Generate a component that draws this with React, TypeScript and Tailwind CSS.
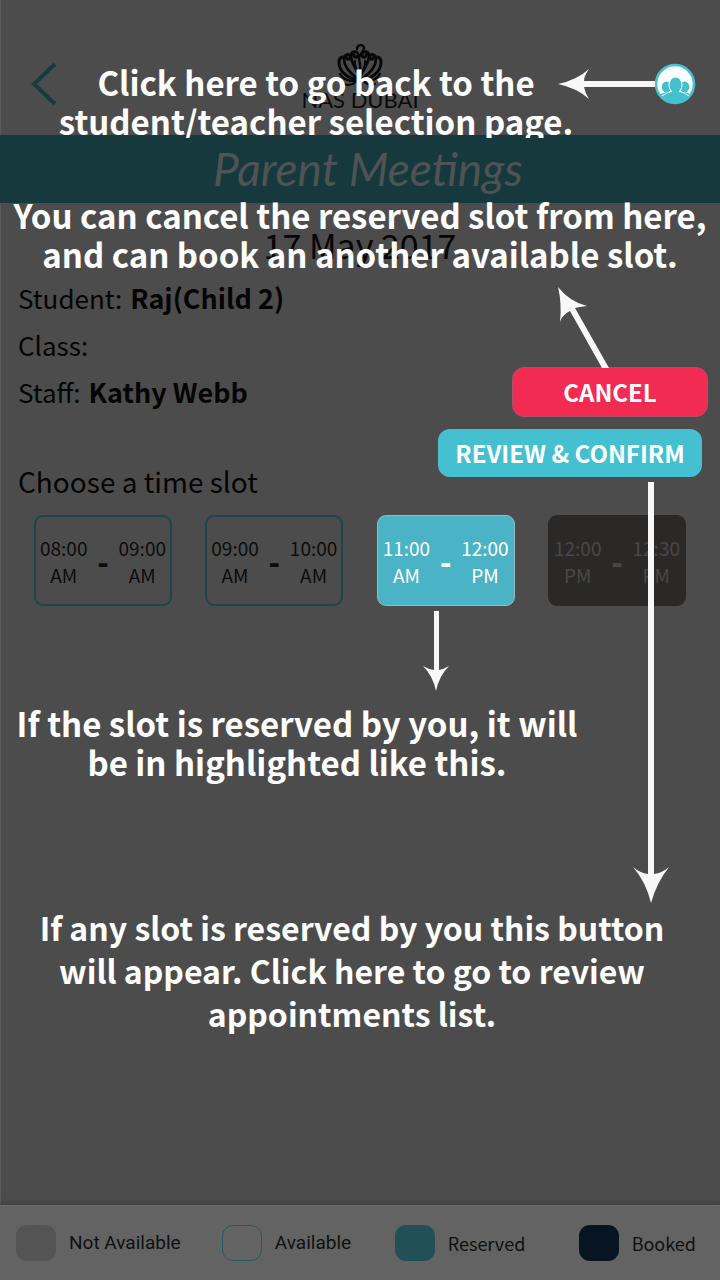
import type { ReactNode } from "react";

type SlotKind = "available" | "reserved" | "booked";

interface Slot {
  from: [string, string];
  to: [string, string];
  kind: SlotKind;
}

const slots: Slot[] = [
  { from: ["08:00", "AM"], to: ["09:00", "AM"], kind: "available" },
  { from: ["09:00", "AM"], to: ["10:00", "AM"], kind: "available" },
  { from: ["11:00", "AM"], to: ["12:00", "PM"], kind: "reserved" },
  { from: ["12:00", "PM"], to: ["12:30", "PM"], kind: "booked" },
];

const slotStyles: Record<SlotKind, string> = {
  available: "border-2 border-[#1d464b] px-1 text-[#0c0c0c]",
  reserved: "border border-[#93bcc4] bg-[#4ab3c5] px-[5px] text-white",
  booked: "border-2 border-[#2b2927] bg-[#2b2927] px-1 text-[#484746]",
};

function Note({ className, children }: { className: string; children: ReactNode }) {
  return (
    <p className={"text-center font-bold whitespace-nowrap text-white " + className}>{children}</p>
  );
}

function LotusHalf() {
  return (
    <>
      <path d="M24 34C21 27 15 20 15 13c0-5 7-6 7-1 0 3-4 3-4 0" strokeWidth="2.8" />
      <path d="M22 36C15 31 8 25 8 16c0-5 6-6 6-2 0 3-3 3-3 1" strokeWidth="2.8" />
      <path d="M20 37C11 34 3 28 3 19c0-4 3-6 5-4" strokeWidth="3" />
      <path d="M19 38C14 38 7 37 4 31" strokeWidth="2.4" />
      <path d="M20 39C16 42 12 43 9 41" strokeWidth="2" />
      <path d="M23 32C20 26 18 21 19 18" strokeWidth="2" />
    </>
  );
}

function Logo() {
  return (
    <div className="flex flex-col items-center">
      <svg width="48" height="44" viewBox="0 0 48 44" fill="none" stroke="#080808" strokeLinecap="round" aria-hidden="true">
        <LotusHalf />
        <g transform="matrix(-1 0 0 1 48 0)">
          <LotusHalf />
        </g>
        <path d="M21 6c0-5 7-5 7-1 0 4-5 6-5 10 0 3 2 4 1 19" strokeWidth="2.4" />
      </svg>
      <span className="font-['Lato','Noto_Sans',sans-serif] text-[22px] leading-[26px] text-[#0a0a0a]">NAS DUBAI</span>
    </div>
  );
}

function TimePart({ value }: { value: [string, string] }) {
  return (
    <span className="flex flex-col items-center text-[19px] leading-[27px]">
      <span>{value[0]}</span>
      <span>{value[1]}</span>
    </span>
  );
}

function LegendItem({ swatch, label, font }: { swatch: string; label: string; font: string }) {
  return (
    <li className="flex items-center gap-[13px]">
      <span className={"h-9 w-10 shrink-0 rounded-[11px] " + swatch} />
      <span className={"whitespace-nowrap text-[#101010] " + font}>{label}</span>
    </li>
  );
}

export default function App() {
  return (
    <main className="relative flex min-h-screen flex-col overflow-hidden bg-[#4c4c4c] font-['Noto_Sans_CJK_SC','Noto_Sans',sans-serif] text-[#050505] shadow-[inset_1px_0_0_#5a5a5a]">
      <header className="relative grid h-[135px] grid-cols-3 items-start px-6 pt-[43px]">
        <button aria-label="Back" className="mt-5 w-9 justify-self-start">
          <svg width="36" height="42" viewBox="0 0 36 42" fill="none" stroke="#173c40" strokeWidth="4" aria-hidden="true">
            <path d="M31 1L10 21l21 20" />
          </svg>
        </button>
        <Logo />
        <div className="relative mt-5 justify-self-end">
          <button aria-label="Student and teacher selection" className="block">
            <svg width="42" height="42" viewBox="0 0 42 42" aria-hidden="true">
              <circle cx="21" cy="21" r="19" fill="#fff" stroke="#45c0d1" strokeWidth="2.6" />
              <g fill="#45c0d1">
                <ellipse cx="12.500" cy="24" rx="4.800" ry="5.600" />
                <ellipse cx="30.500" cy="24" rx="4.800" ry="5.600" />
                <path d="M5 32q3-2 8-3h17q5 1 7 3z" />
                <path d="M7 34q5-4 11-5h7q6 1 11 5A19 19 0 0 1 7 34z" />
                <path d="M8 33q5-4 10-4.500M35 33q-5-4-10-4.500" fill="none" stroke="#fff" strokeWidth=".8" />
                <ellipse cx="21.500" cy="22" rx="6.500" ry="8" stroke="#fff" />
                <path d="M18 27h7v5h-7z" />
              </g>
            </svg>
          </button>
          <svg className="absolute top-[5px] right-[41px]" width="98" height="32" viewBox="0 0 98 32" fill="#f8f8f8" aria-hidden="true">
            <path d="M1 16Q20 12 32 1q-5 7-5 12h71v6H27q1 6 5 12Q20 20 1 16z" />
          </svg>
        </div>
      </header>

      <h1 className="flex h-[68px] items-center justify-center bg-[#16393d] pl-4 font-['Lato','Noto_Sans',sans-serif] text-[46px] leading-[68px] font-normal text-[#505353] italic">
        Parent Meetings
      </h1>

      <time dateTime="2017-05-17" className="mt-[22px] block text-center text-[34px] leading-10">17 May 2017</time>

      <section className="relative flex items-start pt-[9px]">
        <div className="flex-1 pl-[18px]">
          <dl className="flex flex-col text-[26px] leading-[47px]">
            <div className="flex gap-2"><dt>Student:</dt><dd className="text-[27px] font-bold">Raj(Child 2)</dd></div>
            <div className="flex gap-2"><dt>Class:</dt><dd /></div>
            <div className="flex gap-2"><dt>Staff:</dt><dd className="text-[27px] font-bold">Kathy Webb</dd></div>
          </dl>
          <h2 className="mt-12 text-[28px] leading-9">Choose a time slot</h2>
        </div>
        <div className="flex flex-col items-end gap-3 pt-[93px] pr-3">
          <div className="relative">
            <button className="h-[50px] w-[196px] rounded-xl border border-[#b05068] bg-[#f12b52] text-2xl leading-6 font-bold text-white">CANCEL</button>
            <svg className="absolute bottom-[49px] left-[44px]" width="54" height="84" viewBox="0 0 54 84" fill="#f8f8f8" aria-hidden="true">
              <path d="M2 3Q14 18 31 22q-8 1-12 2L53 84h-7L14 27Q6 31 4 38 6 20 2 3z" />
            </svg>
          </div>
          <div className="relative mr-[6px]">
            <button className="h-[48px] w-[264px] rounded-xl bg-[#45c0d1] text-2xl leading-6 font-bold whitespace-nowrap text-white">REVIEW &amp; CONFIRM</button>
            <svg className="absolute top-[53px] right-[33px] z-10" width="36" height="422" viewBox="0 0 36 422" fill="#f8f8f8" aria-hidden="true">
              <path d="M15 0h6v392q8-1 15-7Q24 400 18 421 13 400 0 385q7 6 15 7z" />
            </svg>
          </div>
        </div>
      </section>

      <ul className="mt-4 flex justify-between px-[34px]">
        {slots.map((slot) => (
          <li key={slot.from[0]} className="relative">
            <button className={"flex h-[91px] w-[138px] items-center justify-between rounded-[9px] " + slotStyles[slot.kind]}>
              <TimePart value={slot.from} />
              <span className="text-3xl font-black">-</span>
              <TimePart value={slot.to} />
            </button>
            {slot.kind === "reserved" && (
              <svg className="absolute top-[96px] left-[45px]" width="28" height="80" viewBox="0 0 28 80" fill="#f8f8f8" aria-hidden="true">
                <path d="M12 0h5v59q5-1 10-4Q17 65 14 80 11 65 1 55q5 3 11 4z" />
              </svg>
            )}
          </li>
        ))}
      </ul>

      <Note className="mt-[98px] mr-[126px] text-[33px] leading-[39px]">
        If the slot is reserved by you, it will<br />be in highlighted like this.
      </Note>
      <Note className="mt-[124px] mr-4 text-[32px] leading-[43px]">
        If any slot is reserved by you this button<br />will appear. Click here to go to review<br />appointments list.
      </Note>

      <footer className="mt-auto border-t border-[#6c6c6c] bg-[#636363] shadow-[0_-3px_3px_#444]">
        <ul className="grid h-[74px] grid-cols-[206fr_173fr_184fr_116fr] items-center pr-6 pl-4">
          <LegendItem swatch="bg-[#545454]" label="Not Available" font="font-['Roboto',sans-serif] text-[19px]" />
          <LegendItem swatch="border border-[#225a60]" label="Available" font="font-['Roboto',sans-serif] text-[19px]" />
          <LegendItem swatch="bg-[#215156]" label="Reserved" font="text-[18px]" />
          <LegendItem swatch="bg-[#061521]" label="Booked" font="text-[18px]" />
        </ul>
      </footer>

      <div className="pointer-events-none absolute inset-x-0 top-0">
        <div className="h-[138px] overflow-hidden pt-[63px]">
          <Note className="mr-[88px] text-[33px] leading-[39px]">
            Click here to go back to the<br />student/teacher selection page.
          </Note>
        </div>
        <Note className="mt-[58px] text-[33px] leading-[39px]">
          You can cancel the reserved slot from here,<br />and can book an another available slot.
        </Note>
      </div>
    </main>
  );
}
